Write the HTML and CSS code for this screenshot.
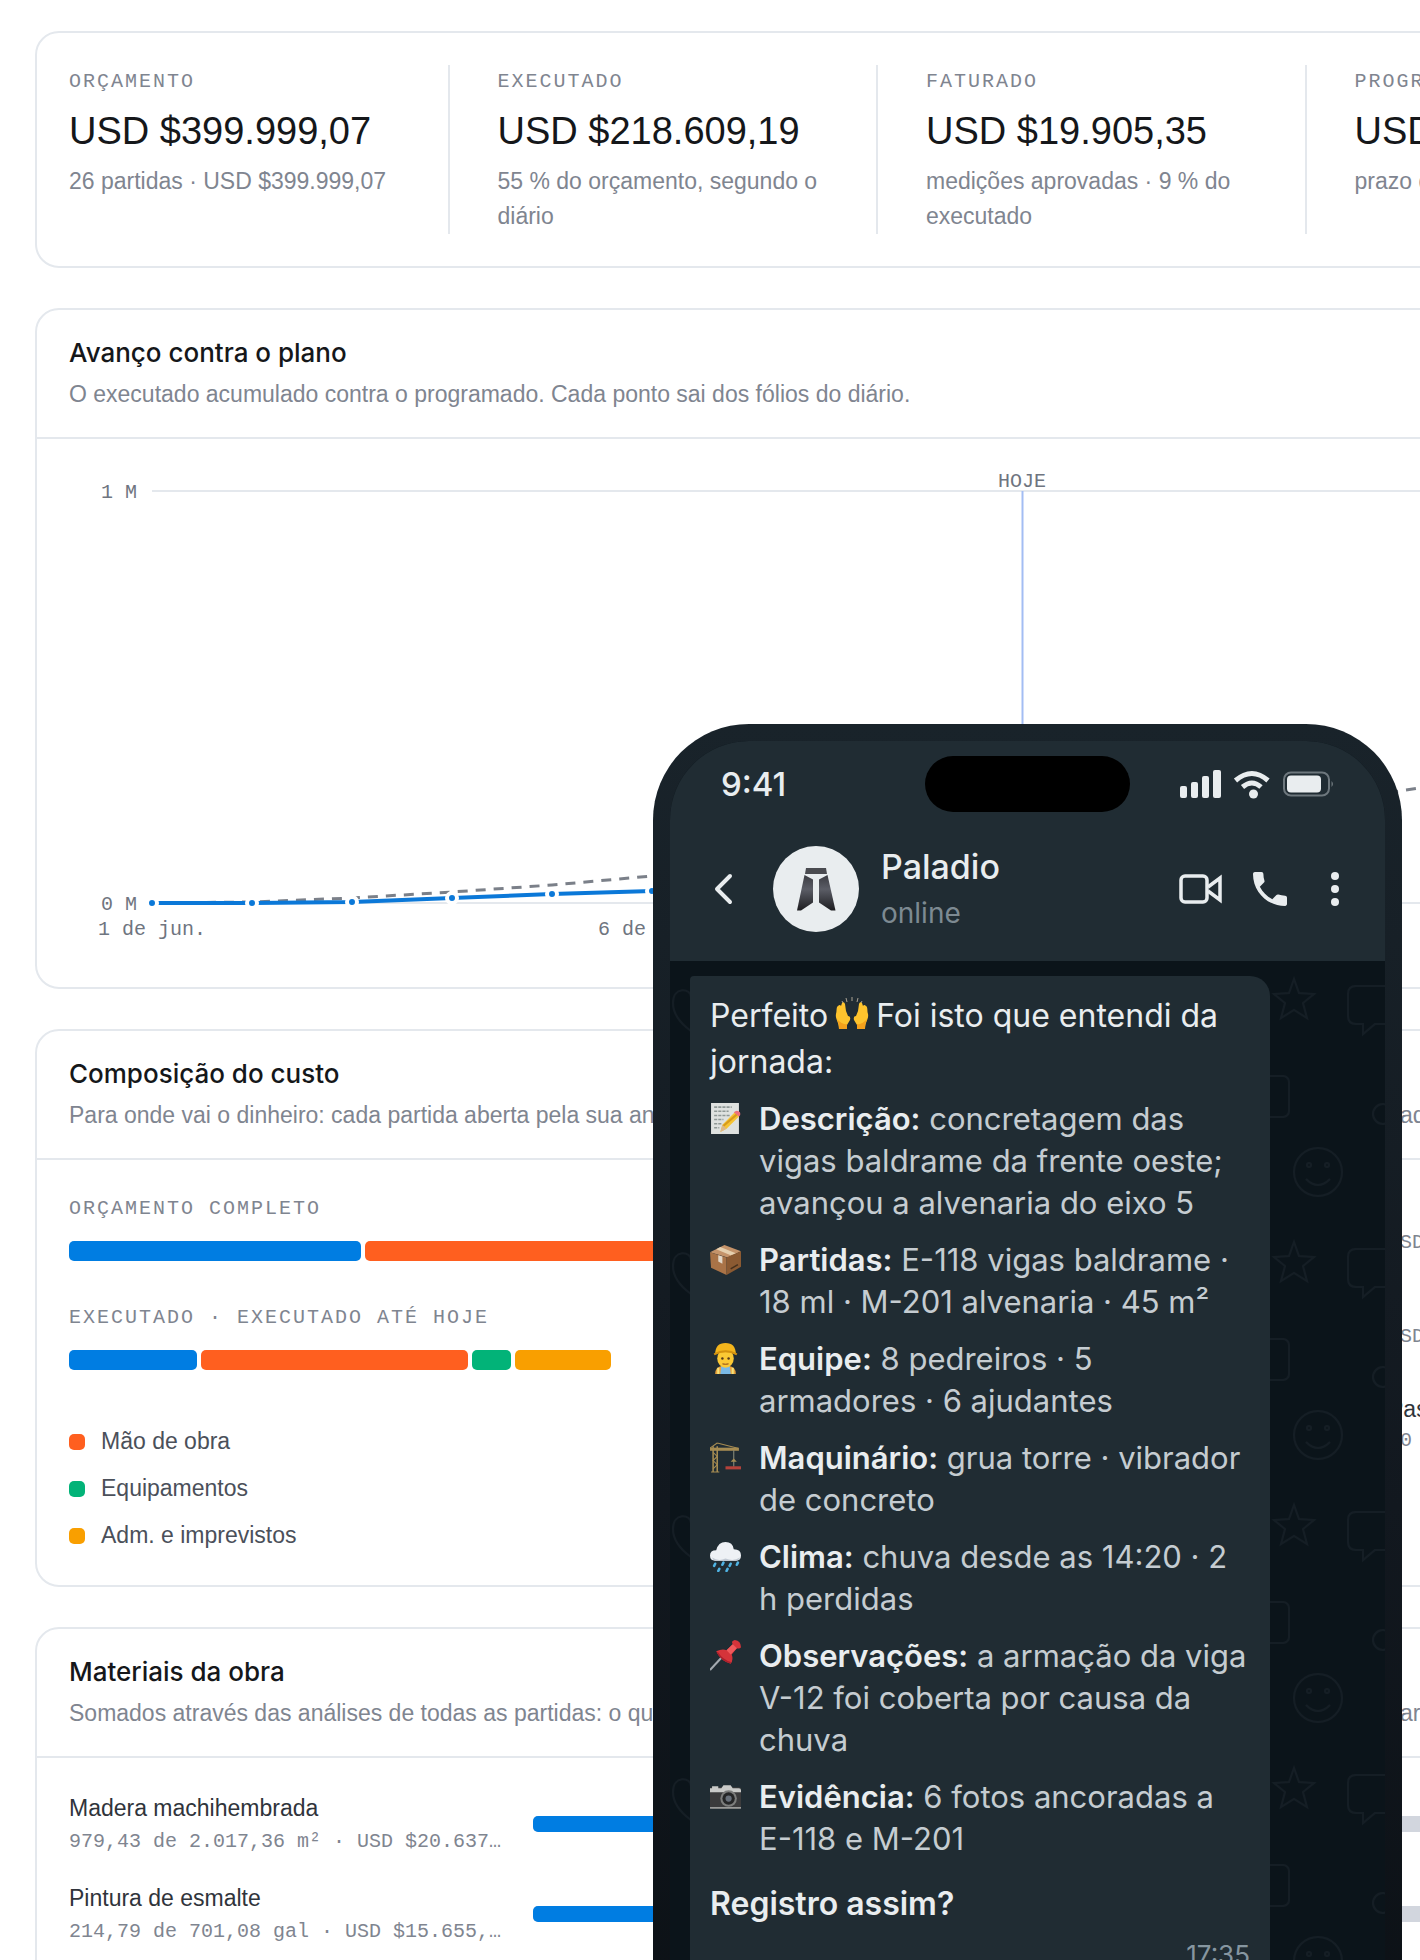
FILE: index.html
```html
<!DOCTYPE html>
<html lang="pt-BR">
<head>
    <meta charset="UTF-8">
    <meta name="viewport" content="width=device-width, initial-scale=1.0">
    <title>Paladio</title>
    <link rel="stylesheet" href="styles.css">
</head>
<body>
    <main class="dashboard">
        <section class="card stats">
            <div class="stat">
                <div class="label">ORÇAMENTO</div>
                <div class="stat-value">USD $399.999,07</div>
                <div class="muted">26 partidas · USD $399.999,07</div>
            </div>
            <div class="stat">
                <div class="label">EXECUTADO</div>
                <div class="stat-value">USD $218.609,19</div>
                <div class="muted">55 % do orçamento, segundo o diário</div>
            </div>
            <div class="stat">
                <div class="label">FATURADO</div>
                <div class="stat-value">USD $19.905,35</div>
                <div class="muted">medições aprovadas · 9 % do executado</div>
            </div>
            <div class="stat">
                <div class="label">PROGRAMADO</div>
                <div class="stat-value">USD $241.300,00</div>
                <div class="muted">prazo da obra</div>
            </div>
        </section>

        <section class="card">
            <header class="card-head">
                <h2>Avanço contra o plano</h2>
                <p class="muted">O executado acumulado contra o programado. Cada ponto sai dos fólios do diário.</p>
            </header>
            <div class="card-body">
                <svg class="chart" width="1666" height="484" viewBox="0 0 1666 484">
                    <path class="grid-line" d="M83 20H1640M83 432H1640"/>
                    <path class="today-line" d="M953.500 20V432"/>
                    <text x="953" y="16" text-anchor="middle">HOJE</text>
                    <text x="68" y="27" text-anchor="end">1 M</text>
                    <text x="68" y="439" text-anchor="end">0 M</text>
                    <text x="83" y="464" text-anchor="middle">1 de jun.</text>
                    <text x="583" y="464" text-anchor="middle">6 de jun.</text>
                    <path class="plan-line" d="M83 432L183 431L283 427L383 421L483 414L583 405L1083 356L1351 317"/>
                    <path class="done-line" d="M83 432H183L283 431L383 427L483 423L583 420"/>
                    <g class="points">
                        <circle cx="83" cy="432" r="5"/>
                        <circle cx="183" cy="432" r="5"/>
                        <circle cx="283" cy="431" r="5"/>
                        <circle cx="383" cy="427" r="5"/>
                        <circle cx="483" cy="423" r="5"/>
                        <circle cx="583" cy="420" r="5"/>
                    </g>
                </svg>
            </div>
        </section>

        <section class="card">
            <header class="card-head">
                <h2>Composição do custo</h2>
                <p class="muted split"><span>Para onde vai o dinheiro: cada partida aberta pela sua análise</span><span>adiante.</span></p>
            </header>
            <div class="card-body split">
                <div>
                    <div class="label">ORÇAMENTO COMPLETO</div>
                    <div class="bar">
                        <span class="blue" style="width: 292px"></span>
                        <span class="orange" style="width: 488px"></span>
                        <span class="green" style="width: 71px"></span>
                        <span class="amber" style="width: 176px"></span>
                    </div>
                    <div class="label">EXECUTADO · EXECUTADO ATÉ HOJE</div>
                    <div class="bar">
                        <span class="blue" style="width: 128px"></span>
                        <span class="orange" style="width: 267px"></span>
                        <span class="green" style="width: 39px"></span>
                        <span class="amber" style="width: 96px"></span>
                    </div>
                    <ul class="legend">
                        <li><i class="orange"></i>Mão de obra</li>
                        <li><i class="green"></i>Equipamentos</li>
                        <li><i class="amber"></i>Adm. e imprevistos</li>
                    </ul>
                </div>
                <ul class="cost-list">
                    <li><span>USD</span></li>
                    <li><span>USD</span></li>
                    <li>Pastas<span>30</span></li>
                </ul>
            </div>
        </section>

        <section class="card">
            <header class="card-head">
                <h2>Materiais da obra</h2>
                <p class="muted split"><span>Somados através das análises de todas as partidas: o que</span><span>armado.</span></p>
            </header>
            <div class="card-body materials">
                <div class="material">
                    <div class="material-info">
                        <div class="material-name">Madera machihembrada</div>
                        <div class="material-detail">979,43 de 2.017,36 m² · USD $20.637,12</div>
                    </div>
                    <div class="track"><span style="width: 49%"></span></div>
                </div>
                <div class="material">
                    <div class="material-info">
                        <div class="material-name">Pintura de esmalte</div>
                        <div class="material-detail">214,79 de 701,08 gal · USD $15.655,40</div>
                    </div>
                    <div class="track"><span style="width: 31%"></span></div>
                </div>
            </div>
        </section>
    </main>

    <aside class="phone">
        <div class="screen">
            <div class="phone-top">
                <div class="status">
                    <span class="time">9:41</span>
                    <span class="island"></span>
                    <svg class="status-icons" width="156" height="32" viewBox="0 0 156 32" fill="#e9edef">
                        <rect x="0" y="18" width="7" height="12" rx="2"/>
                        <rect x="11" y="14" width="7" height="16" rx="2"/>
                        <rect x="22" y="8" width="7" height="22" rx="2"/>
                        <rect x="33" y="2" width="8" height="28" rx="2"/>
                        <g fill="none" stroke="#e9edef" stroke-width="5">
                            <path d="M55.500 12.500Q72 -1.500 88 12.500"/>
                            <path d="M62.500 19Q72 11 81 19"/>
                        </g>
                        <circle cx="73.500" cy="26" r="4.500"/>
                        <rect x="104" y="4.500" width="45" height="23" rx="7" fill="none" stroke="#6d777d" stroke-width="2"/>
                        <rect x="107" y="7.500" width="34" height="17" rx="4"/>
                        <path d="M151.500 13q3 3 0 6z" fill="#6d777d"/>
                    </svg>
                </div>
                <div class="chat-head">
                    <button class="icon-button back" aria-label="Voltar">
                        <svg width="20" height="34" viewBox="0 0 20 34"><path d="M17 4L4 17L17 30" fill="none" stroke="#e9edef" stroke-width="4" stroke-linecap="round" stroke-linejoin="round"/></svg>
                    </button>
                    <svg class="avatar" width="86" height="86" viewBox="0 0 86 86">
                        <defs>
                            <linearGradient id="metal" x1="0" y1="0" x2="0" y2="1">
                                <stop offset="0" stop-color="#3b3c42"/>
                                <stop offset=".4" stop-color="#5b5d66"/>
                                <stop offset="1" stop-color="#1d1d20"/>
                            </linearGradient>
                        </defs>
                        <circle cx="43" cy="43" r="43" fill="#e9edef"/>
                        <path d="M33 22H53L54 28H32z" fill="#4a4b50"/>
                        <path d="M31.500 29L40 33.500V56.500L28 64.500L24 64.500z" fill="url(#metal)"/>
                        <path d="M54.500 29L46 33.500V56.500L58 64.500L62.500 64.500z" fill="url(#metal)"/>
                    </svg>
                    <div class="contact">
                        <div class="contact-name">Paladio</div>
                        <div class="contact-state">online</div>
                    </div>
                    <button class="icon-button" aria-label="Chamada de vídeo">
                        <svg width="44" height="32" viewBox="0 0 44 32" fill="none" stroke="#e9edef" stroke-width="3.500" stroke-linejoin="round"><rect x="2" y="3" width="26" height="26" rx="4"/><path d="M29 14L41 5V27L29 18" stroke-linejoin="miter"/></svg>
                    </button>
                    <button class="icon-button call" aria-label="Ligar">
                        <svg width="34" height="34" viewBox="3 3 18 18" fill="#e9edef"><path d="M6.620 10.790c1.440 2.830 3.760 5.140 6.590 6.590l2.200-2.200c.27-.27.67-.36 1.020-.24 1.120.37 2.330.57 3.570.57.55 0 1 .45 1 1V20c0 .55-.45 1-1 1-9.390 0-17-7.610-17-17 0-.55.45-1 1-1h3.500c.55 0 1 .45 1 1 0 1.250.2 2.450.57 3.570.11.35.03.74-.25 1.020l-2.200 2.200z"/></svg>
                    </button>
                    <button class="icon-button" aria-label="Mais opções">
                        <svg width="10" height="36" viewBox="0 0 10 36" fill="#e9edef"><circle cx="5" cy="5" r="4"/><circle cx="5" cy="18" r="4"/><circle cx="5" cy="31" r="4"/></svg>
                    </button>
                </div>
            </div>
            <div class="chat">
                <svg class="wallpaper" width="100%" height="100%">
                    <defs>
                        <pattern id="doodles" width="720" height="263" patternUnits="userSpaceOnUse">
                            <g fill="none" stroke="#151e25" stroke-width="2">
                                <path d="M21 70Q3 57 3 42C3 25 21 27 21 36C21 27 39 25 39 42Q39 57 21 70z"/>
                                <path d="M624 18L629 32L644 33L633 42L637 57L624 49L611 57L615 42L604 33L619 32z"/>
                                <path d="M720 25H686Q678 25 678 33V55Q678 63 686 63H693V73L705 63H720"/>
                                <rect x="580" y="115" width="39" height="41" rx="6"/>
                                <circle cx="713" cy="153" r="10"/>
                                <circle cx="648" cy="211" r="24"/>
                                <circle cx="639" cy="204" r="2"/>
                                <circle cx="657" cy="204" r="2"/>
                                <path d="M636 218Q648 230 660 218"/>
                            </g>
                        </pattern>
                    </defs>
                    <rect width="100%" height="100%" fill="url(#doodles)"/>
                </svg>
                <article class="bubble">
                    <p class="bubble-intro">Perfeito <svg class="emoji-inline" width="34" height="34" viewBox="0 0 34 34" role="img" aria-label="Mãos ao alto">
                            <g stroke="#a9a294" stroke-width="1"><path d="M11 1l1 4M17 0v4M23 1l-1 4M7 4l1 2M27 4l-1 2"/></g>
                            <path d="M4 32C4 25 0 22 1 17C2 14 1 10 3 9Q5 7 6 9L7 6Q9 4 10 7L11 14L13 19Q16 19 15 23L12 28V32z" fill="#fdc32d"/>
                            <path d="M30 32C30 25 34 22 33 17C32 14 33 10 31 9Q29 7 28 9L27 6Q25 4 24 7L23 14L21 19Q18 19 19 23L22 28V32z" fill="#fdc32d"/>
                            <path d="M4 32Q4 26 2 22Q7 28 12 27V32zM30 32Q30 26 32 22Q27 28 22 27V32z" fill="#f5a11b"/>
                        </svg> Foi isto que entendi da jornada:</p>
                    <ul class="entry-list">
                        <li>
                            <svg class="emoji" viewBox="0 0 30 30" aria-hidden="true">
                                <rect x="1" y="0" width="27" height="30" fill="#dfe2e0"/>
                                <path d="M4 4h17M4 8h14M4 12h15M4 16h9M4 20h7M4 24h5" stroke="#8f9896" stroke-width="1.500" stroke-dasharray="3 1"/>
                                <path d="M10 28L12 21L24 9L28 13L16 25z" fill="#f6c433"/>
                                <path d="M12 23L26 11" stroke="#d79a1c" stroke-width="2"/>
                                <path d="M23 9Q26 6 29 9Q30 12 28 13z" fill="#ee6f7b"/>
                                <path d="M10 28L12 21L16 25z" fill="#dcb88a"/>
                            </svg>
                            <p><b>Descrição:</b> concretagem das vigas baldrame da frente oeste; avançou a alvenaria do eixo 5</p>
                        </li>
                        <li>
                            <svg class="emoji" viewBox="0 0 30 30" aria-hidden="true">
                                <path d="M0 8L14 1L30 7L17 13z" fill="#c4936a"/>
                                <path d="M0 8L16 13V30L1 23z" fill="#a97347"/>
                                <path d="M16 13L30 7V22L16 30z" fill="#8b5a32"/>
                                <path d="M6 5L10 3L25 9L20 11z" fill="#e5cfae"/>
                                <path d="M8 11L12 12V19L8 17z" fill="#e2d8c9"/>
                                <path d="M20 24L27 20" stroke="#46301c" stroke-width="1.500"/>
                            </svg>
                            <p><b>Partidas:</b> E-118 vigas baldrame · 18 ml · M-201 alvenaria · 45 m²</p>
                        </li>
                        <li>
                            <svg class="emoji" viewBox="0 0 30 30" aria-hidden="true">
                                <path d="M5 30Q5 23 12 22H18Q25 23 25 30z" fill="#e9a23b"/>
                                <path d="M11 22H19L20 30H10z" fill="#79b9e6"/>
                                <path d="M8 24V30M22 24V30" stroke="#f4e27a" stroke-width="2"/>
                                <ellipse cx="15" cy="15" rx="8" ry="9" fill="#fbc934"/>
                                <path d="M5 11Q5 0 15 0Q25 0 25 11Q15 7 5 11z" fill="#f3b51c"/>
                                <path d="M4 11Q15 5 26 11" fill="none" stroke="#d3920f" stroke-width="2"/>
                                <circle cx="12" cy="15" r="1.200" fill="#54391b"/><circle cx="18" cy="15" r="1.200" fill="#54391b"/>
                                <path d="M12 20Q15 21 18 20" fill="none" stroke="#9a5a1b"/>
                            </svg>
                            <p><b>Equipe:</b> 8 pedreiros · 5 armadores · 6 ajudantes</p>
                        </li>
                        <li>
                            <svg class="emoji" viewBox="0 0 30 30" aria-hidden="true">
                                <g fill="none" stroke="#a68c52">
                                    <path d="M0 7H28" stroke-width="3"/>
                                    <path d="M3 4V29M7 4V29" stroke-width="1.500"/>
                                    <path d="M3 10L7 14L3 18L7 22L3 26M7 1L27 6M7 1L0 6M1 29H9"/>
                                    <path d="M23 8V24" stroke="#8d8f7c"/>
                                </g>
                                <path d="M20 19L23 16L26 19z" fill="#a68c52"/>
                                <path d="M15 25H31" stroke="#b4423b" stroke-width="3"/>
                            </svg>
                            <p><b>Maquinário:</b> grua torre · vibrador de concreto</p>
                        </li>
                        <li>
                            <svg class="emoji" viewBox="0 0 30 30" aria-hidden="true">
                                <path d="M5 19Q0 19 0 14Q0 9 6 9Q8 1 15 1Q22 1 23 8Q30 8 30 14Q30 19 25 19z" fill="#eef1f5"/>
                                <path d="M2 16Q8 20 15 17Q23 20 29 16Q28 19 25 19H5Q3 19 2 16z" fill="#c3cad4"/>
                                <path d="M5 22L4 24M13 21L12 23M20 22L19 24M27 21L26 23M9 27L8 29M17 27L16 29" stroke="#4fb3e3" stroke-width="2.500" stroke-linecap="round"/>
                            </svg>
                            <p><b>Clima:</b> chuva desde as 14:20 · 2 h perdidas</p>
                        </li>
                        <li>
                            <svg class="emoji" viewBox="0 0 30 30" aria-hidden="true">
                                <path d="M0 29L13 15" stroke="#a3aab0" stroke-width="2"/>
                                <path d="M6 11Q12 8 16 10L22 4Q20 1 24 0Q30 1 30 7Q29 9 26 8L21 14Q23 19 20 23Q11 21 6 11z" fill="#d5343a"/>
                                <path d="M16 10L22 4L26 8L20 14z" fill="#f0595b"/>
                                <path d="M7 12Q12 20 20 22" fill="none" stroke="#a81f2b" stroke-width="1.500"/>
                            </svg>
                            <p><b>Observações:</b> a armação da viga V-12 foi coberta por causa da chuva</p>
                        </li>
                        <li>
                            <svg class="emoji" viewBox="0 0 30 30" aria-hidden="true">
                                <rect x="0" y="6" width="30" height="21" rx="2" fill="#3b3b3c"/>
                                <path d="M0 11V7H2V5H8V7H11L13 4H20L22 7H28Q30 7 30 9V11z" fill="#c9cac8"/>
                                <circle cx="18" cy="17" r="8" fill="#7c7d7c"/>
                                <circle cx="18" cy="17" r="6" fill="#252627"/>
                                <circle cx="18" cy="17" r="3" fill="#68707a"/>
                                <path d="M0 26H30" stroke="#a5a6a5" stroke-width="1.500"/>
                            </svg>
                            <p><b>Evidência:</b> 6 fotos ancoradas a E-118 e M-201</p>
                        </li>
                    </ul>
                    <p class="bubble-question">Registro assim?</p>
                    <time class="bubble-time">17:35</time>
                </article>
            </div>
        </div>
    </aside>
</body>
</html>
```
FILE: styles.css
```css
* {
    box-sizing: border-box;
}

body {
    margin: 0;
    height: 100vh;
    position: relative;
    overflow: hidden;
    background: #fff;
    color: #15171a;
    font-family: "Liberation Sans", Arial, sans-serif;
    font-size: 23px;
}

h2, p, ul {
    margin: 0;
    padding: 0;
}

ul {
    list-style: none;
}

/* The dashboard runs past the right edge of the window */
.dashboard {
    display: flex;
    flex-direction: column;
    gap: 40px;
    margin: 31px -347px 0 35px;
}

.card {
    border: 2px solid #e4e8ed;
    border-radius: 24px;
    background: #fff;
}

.card-head {
    padding: 23px 32px 24px;
    border-bottom: 2px solid #e4e8ed;
}

.card-head h2 {
    font-family: Inter, sans-serif;
    font-size: 26px;
    font-weight: 500;
    line-height: 40px;
}

.card-head p {
    line-height: 37px;
    padding-top: 3px;
    white-space: nowrap;
}

.card-body {
    padding: 32px;
}

.split {
    display: grid;
    grid-template-columns: 1331px auto;
}

.muted {
    color: #7f8590;
    line-height: 35px;
}

.label {
    font-family: "Liberation Mono", monospace;
    font-size: 20px;
    letter-spacing: 2px;
    line-height: 34px;
    color: #7f8590;
}

/* Stats */
.stats {
    display: flex;
    padding: 32px;
}

.stat {
    flex: 1 1 0;
    box-sizing: content-box;
    padding-right: 40px;
}

.stat + .stat {
    border-left: 2px solid #e4e8ed;
    padding-left: 48px;
}

.stat-value {
    font-size: 38px;
    line-height: 65px;
}

/* Chart */
.chart {
    display: block;
    font-family: "Liberation Mono", monospace;
    font-size: 20px;
    fill: #6f7580;
}

.grid-line {
    stroke: #e4e8ed;
    stroke-width: 2;
}

.today-line {
    stroke: #a3bdf3;
    stroke-width: 2;
}

.plan-line {
    fill: none;
    stroke: #7b8089;
    stroke-width: 3;
    stroke-dasharray: 10 8;
}

.done-line {
    fill: none;
    stroke: #0b78d8;
    stroke-width: 4;
}

.points circle {
    fill: #0b78d8;
    stroke: #fff;
    stroke-width: 4;
}

/* Cost breakdown */
.bar {
    display: flex;
    gap: 4px;
    margin: 15px 0 40px;
}

.bar span {
    height: 20px;
    border-radius: 5px;
}

.blue {
    background: #007de2;
}

.orange {
    background: #ff5f1f;
}

.green {
    background: #02b378;
}

.amber {
    background: #f99f00;
}

.legend {
    display: grid;
    gap: 12px;
    padding-top: 14px;
    color: #4b505a;
}

.legend li {
    display: flex;
    align-items: center;
    gap: 16px;
    line-height: 35px;
}

.legend i {
    width: 16px;
    height: 16px;
    border-radius: 5px;
}

.cost-list {
    display: grid;
    align-content: start;
    gap: 40px;
    padding-top: 35px;
    margin-left: -12px;
    color: #30343b;
}

.cost-list li {
    line-height: 32px;
    white-space: nowrap;
}

.cost-list li:first-child {
    padding-bottom: 22px;
}

.cost-list span {
    display: block;
    font-family: "Liberation Mono", monospace;
    font-size: 20px;
    color: #7f8590;
}

/* Materials */
.materials {
    display: grid;
    gap: 22px;
}

.material {
    display: flex;
    align-items: center;
    gap: 30px;
}

.material-info {
    flex: 0 0 434px;
    min-width: 0;
}

.material-name {
    line-height: 36px;
    color: #30343b;
}

.material-detail {
    overflow: hidden;
    text-overflow: ellipsis;
    white-space: nowrap;
    font-family: "Liberation Mono", monospace;
    font-size: 20px;
    line-height: 32px;
    color: #7f8590;
}

.track {
    flex: 1;
    height: 16px;
    border-radius: 5px;
    background: #d2d6de;
    overflow: hidden;
}

.track span {
    display: block;
    height: 100%;
    background: #007de2;
}

/* Phone lying over the dashboard */
.phone {
    position: absolute;
    top: 724px;
    right: 18px;
    width: 749px;
    padding: 17px 17px 0;
    border-radius: 96px 96px 0 0;
    background: linear-gradient(#19232a, #12181f 60%, #0c1116);
    font-family: Inter, sans-serif;
    color: #e9edef;
}

.screen {
    border-radius: 79px 79px 0 0;
    overflow: hidden;
    background: #0b141a;
}

.phone-top {
    padding: 15px 43px 26px;
    background: #202c33;
}

.status {
    display: grid;
    grid-template-columns: 1fr 205px 1fr;
    align-items: center;
    padding: 0 6px;
}

.time {
    padding-left: 2px;
    font-size: 33px;
    font-weight: 500;
    line-height: 40px;
}

.island {
    height: 56px;
    border-radius: 28px;
    background: #000;
}

.status-icons {
    justify-self: end;
}

.chat-head {
    display: flex;
    align-items: center;
    padding: 31px 2px 0 0;
}

.icon-button {
    display: flex;
    padding: 0;
    border: 0;
    background: none;
}

.back {
    margin-right: 40px;
}

.contact {
    flex: 1;
    padding-left: 22px;
}

.contact-name {
    font-size: 34px;
    font-weight: 500;
    line-height: 48px;
}

.contact-state {
    font-size: 28px;
    line-height: 44px;
    color: #7d8a92;
}

.call {
    margin: 0 43px 0 30px;
}

.chat {
    position: relative;
    padding: 15px 20px;
}

.wallpaper {
    position: absolute;
    inset: 0;
}

.bubble {
    position: relative;
    width: 580px;
    padding: 17px 20px 40px;
    border-radius: 4px 20px 20px 20px;
    background: #202c33;
}

.bubble-intro {
    font-size: 32px;
    line-height: 46px;
}

.emoji-inline {
    vertical-align: -4px;
    margin: 0 -2px;
}

.entry-list {
    display: grid;
    gap: 15px;
    padding: 13px 0 21px;
    font-size: 31px;
    line-height: 42px;
    color: #c5ccd1;
}

.entry-list li {
    display: flex;
    gap: 18px;
}

.entry-list b {
    font-weight: 600;
    color: #e9edef;
}

.emoji {
    flex: 0 0 31px;
    height: 31px;
    margin-top: 5px;
}

.bubble-question {
    font-size: 32px;
    font-weight: 600;
    line-height: 46px;
}

.bubble-time {
    display: block;
    padding-top: 10px;
    font-size: 26px;
    line-height: 36px;
    text-align: right;
    color: #8696a0;
}
```
